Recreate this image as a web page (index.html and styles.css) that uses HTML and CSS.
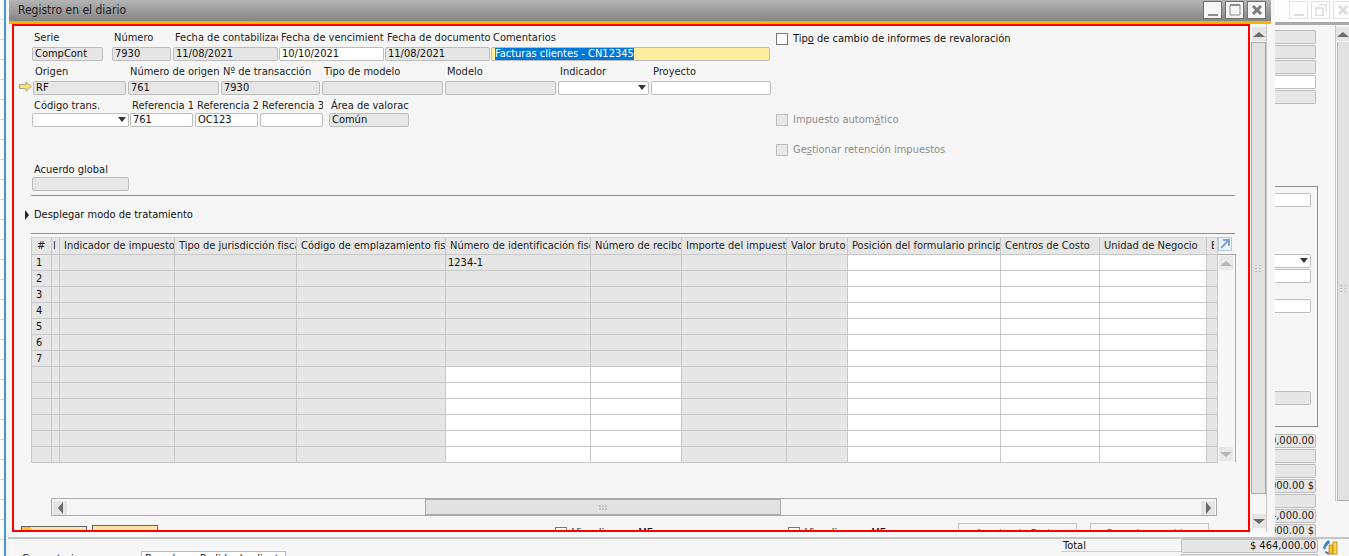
FILE: index.html
```html
<!DOCTYPE html>
<html lang="es">
<head>
    <meta charset="UTF-8">
    <meta name="viewport" content="width=device-width, initial-scale=1.0">
    <title>Registro en el diario</title>
    <link rel="stylesheet" href="styles.css">
</head>
<body>
    <svg class="defs" width="0" height="0">
        <symbol id="grip-v" viewBox="0 0 7 7"><path d="M0 0h2v1H0zM4 0h2v1H4zM0 3h2v1H0zM4 3h2v1H4zM0 6h2v1H0zM4 6h2v1H4z" fill="#bdbdbd"/></symbol>
        <symbol id="grip-h" viewBox="0 0 9 5"><path d="M0 0h2v2H0zM3 0h2v2H3zM6 0h2v2H6zM0 3h2v2H0zM3 3h2v2H3zM6 3h2v2H6z" fill="#c4c4c4"/></symbol>
    </svg>

    <!-- desktop behind the windows -->
    <div class="desk-strip"></div>

    <!-- window behind, only its right side and bottom show -->
    <div class="back-title">
        <div class="back-btn"><svg width="12" height="12"><path d="M1 10h10v2H1z" fill="#ddd"/></svg></div>
        <div class="back-btn"><svg width="12" height="12"><path d="M4 .5h7.500v7.500M1 4h7v7.500H1z" fill="none" stroke="#ddd" stroke-width="1.500"/></svg></div>
        <div class="back-btn"><svg width="12" height="12"><path d="M2 2l8 8M10 2l-8 8" stroke="#ddd" stroke-width="3"/></svg></div>
    </div>
    <div class="back-side">
        <div class="side-field grey"></div>
        <div class="side-field grey"></div>
        <div class="side-field grey"></div>
        <div class="side-field"></div>
        <div class="side-field grey"></div>
        <div class="side-box">
            <div class="box-field"></div>
            <div class="box-field dropdown"><span class="caret"></span></div>
            <div class="box-field"></div>
            <div class="box-field"></div>
            <div class="box-field grey"></div>
        </div>
        <div class="side-field grey">00,000.00</div>
        <div class="side-field grey"></div>
        <div class="side-field grey"></div>
        <div class="side-field grey">$ 6,000.00</div>
        <div class="side-field grey"></div>
        <div class="side-field grey">464,000.00</div>
        <div class="side-field grey">$ 6,000.00</div>
    </div>
    <div class="back-scroll">
        <div class="scroll-btn"><span class="tri up"></span></div>
        <div class="back-track"><svg class="grip" width="7" height="7"><use href="#grip-v"/></svg></div>
    </div>
    <div class="back-foot">
        <span class="foot-label">Comentarios</span>
        <div class="foot-select">Basado en Pedido de clientes</div>
        <span class="total-label">Total</span>
        <div class="total-col">
            <div class="total-value">$ 464,000.00</div>
            <div class="total-next"></div>
        </div>
        <svg class="coins" width="16" height="16" viewBox="0 0 16 16">
            <path d="M1 9C2 5 4 2 7 1l1 3C6 5 4 7 3 11z" fill="#3f86c8"/>
            <path d="M4 12c2 2 4 2 5 1v2c-2 1-5 0-6-2z" fill="#2f6fb0"/>
            <rect x="7" y="6" width="4" height="9" fill="#f6c22e" stroke="#b98412" stroke-width=".8"/>
            <rect x="11" y="3" width="4" height="12" fill="#fbd651" stroke="#b98412" stroke-width=".8"/>
        </svg>
    </div>

    <!-- front window -->
    <div class="window">
        <div class="titlebar">
            <span class="title">Registro en el diario</span>
            <div class="win-btns">
                <div class="win-btn"><svg width="12" height="12"><path d="M1 10h10v2H1z" fill="#8c8c8c"/></svg></div>
                <div class="win-btn"><svg width="12" height="12"><path d="M1 1h10v10H1z" fill="none" stroke="#8c8c8c"/><path d="M1 1h10" stroke="#8c8c8c" stroke-width="2"/></svg></div>
                <div class="win-btn"><svg width="12" height="12"><path d="M2 2l8 8M10 2l-8 8" stroke="#7c7c7c" stroke-width="3"/></svg></div>
            </div>
        </div>
        <div class="accent"></div>

        <div class="win-body">
            <div class="content">
                <div class="form-top">
                    <div class="form-left">
                        <div class="row row-a">
                            <div class="group w-serie"><label>Serie</label><div class="field grey">CompCont</div></div>
                            <div class="group w-numero"><label>Número</label><div class="field grey">7930</div></div>
                            <div class="group w-fecha"><label>Fecha de contabilizació</label><div class="field grey">11/08/2021</div></div>
                            <div class="group w-fecha"><label>Fecha de vencimiento</label><div class="field">10/10/2021</div></div>
                            <div class="group w-fecha"><label>Fecha de documento</label><div class="field grey">11/08/2021</div></div>
                            <div class="group w-coment"><label>Comentarios</label><div class="field focus"><span class="selected">Facturas clientes - CN12345</span></div></div>
                        </div>
                        <div class="row row-b">
                            <svg class="link-arrow" width="13" height="11" viewBox="0 0 13 11"><path d="M.5 3.500h6.500V.8L12.300 5.500 7 10.200V7.500H.5z" fill="#fde36a" stroke="#a8a48c"/></svg>
                            <div class="group w-origen"><label>Origen</label><div class="field grey">RF</div></div>
                            <div class="group w-norigen"><label>Número de origen</label><div class="field grey">761</div></div>
                            <div class="group w-trans"><label>Nº de transacción</label><div class="field grey">7930</div></div>
                            <div class="group w-tipo"><label>Tipo de modelo</label><div class="field grey"></div></div>
                            <div class="group w-modelo"><label>Modelo</label><div class="field grey"></div></div>
                            <div class="group w-indic"><label>Indicador</label><div class="field dropdown"><span class="caret"></span></div></div>
                            <div class="group w-proy"><label>Proyecto</label><div class="field"></div></div>
                        </div>
                        <div class="row row-c">
                            <div class="group w-codigo"><label>Código trans.</label><div class="field dropdown"><span class="caret"></span></div></div>
                            <div class="group w-ref"><label>Referencia 1</label><div class="field">761</div></div>
                            <div class="group w-ref"><label>Referencia 2</label><div class="field">OC123</div></div>
                            <div class="group w-ref last"><label>Referencia 3</label><div class="field"></div></div>
                            <div class="group w-area"><label>Área de valoración</label><div class="field grey">Común</div></div>
                        </div>
                        <div class="row row-d">
                            <div class="group w-codigo"><label>Acuerdo global</label><div class="field grey"></div></div>
                        </div>
                    </div>
                    <div class="form-right">
                        <div class="check-row first"><span class="check"></span><span>Tip<u>o</u> de cambio de informes de revaloración</span></div>
                        <div class="check-row off second"><span class="check"></span><span>Impuesto autom<u>á</u>tico</span></div>
                        <div class="check-row off third"><span class="check"></span><span>Ge<u>s</u>tionar retención impuestos</span></div>
                    </div>
                </div>

                <div class="rule"></div>
                <div class="expander"><span class="tri right dark"></span>Desplegar modo de tratamiento</div>
                <div class="rule"></div>

                <div class="grid-wrap">
                    <table class="lines">
                        <thead>
                            <tr><th>#</th><th>l</th><th>Indicador de impuestos</th><th>Tipo de jurisdicción fiscal</th><th>Código de emplazamiento fiscal</th><th>Número de identificación fiscal</th><th>Número de recibo</th><th>Importe del impuesto</th><th>Valor bruto</th><th>Posición del formulario principal</th><th>Centros de Costo</th><th>Unidad de Negocio</th><th><span class="cut">E</span></th></tr>
                        </thead>
                        <tbody>
                            <tr><td>1</td><td></td><td></td><td></td><td></td><td class="tax-id">1234-1</td><td></td><td></td><td></td><td></td><td></td><td></td><td></td></tr>
                            <tr><td>2</td><td></td><td></td><td></td><td></td><td></td><td></td><td></td><td></td><td></td><td></td><td></td><td></td></tr>
                            <tr><td>3</td><td></td><td></td><td></td><td></td><td></td><td></td><td></td><td></td><td></td><td></td><td></td><td></td></tr>
                            <tr><td>4</td><td></td><td></td><td></td><td></td><td></td><td></td><td></td><td></td><td></td><td></td><td></td><td></td></tr>
                            <tr><td>5</td><td></td><td></td><td></td><td></td><td></td><td></td><td></td><td></td><td></td><td></td><td></td><td></td></tr>
                            <tr><td>6</td><td></td><td></td><td></td><td></td><td></td><td></td><td></td><td></td><td></td><td></td><td></td><td></td></tr>
                            <tr><td>7</td><td></td><td></td><td></td><td></td><td></td><td></td><td></td><td></td><td></td><td></td><td></td><td></td></tr>
                            <tr class="open"><td></td><td></td><td></td><td></td><td></td><td></td><td></td><td></td><td></td><td></td><td></td><td></td><td></td></tr>
                            <tr class="open"><td></td><td></td><td></td><td></td><td></td><td></td><td></td><td></td><td></td><td></td><td></td><td></td><td></td></tr>
                            <tr class="open"><td></td><td></td><td></td><td></td><td></td><td></td><td></td><td></td><td></td><td></td><td></td><td></td><td></td></tr>
                            <tr class="open"><td></td><td></td><td></td><td></td><td></td><td></td><td></td><td></td><td></td><td></td><td></td><td></td><td></td></tr>
                            <tr class="open"><td></td><td></td><td></td><td></td><td></td><td></td><td></td><td></td><td></td><td></td><td></td><td></td><td></td></tr>
                            <tr class="open"><td></td><td></td><td></td><td></td><td></td><td></td><td></td><td></td><td></td><td></td><td></td><td></td><td></td></tr>
                        </tbody>
                    </table>
                    <div class="grid-side">
                        <svg class="expand" width="14" height="14" viewBox="0 0 14 14">
                            <rect x=".5" y=".5" width="13" height="13" fill="#eef3f9" stroke="#b4cbe4"/>
                            <path d="M3 11l7-7M5 3h6v6" fill="none" stroke="#7ea6d2" stroke-width="2"/>
                        </svg>
                        <div class="grid-vbar">
                            <div class="scroll-btn faded"><span class="tri up"></span></div>
                            <div class="scroll-btn faded"><span class="tri down"></span></div>
                        </div>
                    </div>
                </div>

                <div class="hbar">
                    <div class="scroll-btn"><span class="tri left"></span></div>
                    <div class="hbar-thumb"><svg width="9" height="5"><use href="#grip-h"/></svg></div>
                    <div class="scroll-btn"><span class="tri right"></span></div>
                </div>

                <div class="actions">
                    <button class="btn-add"><span class="btn-mark"></span>Añadir</button>
                    <button class="btn-cancel">Cancelar</button>
                    <div class="check-row foot-a"><span class="check"></span><span>Visualizar en ME</span></div>
                    <div class="check-row foot-b"><span class="check"></span><span>Visualizar en ME</span></div>
                    <button class="btn-off first-off">Asociar de Fecha</button>
                    <button class="btn-off">Cancelar cambios</button>
                </div>
            </div>

            <div class="win-scroll">
                <div class="scroll-btn"><span class="tri up"></span></div>
                <div class="win-track"><svg class="grip" width="7" height="7"><use href="#grip-v"/></svg></div>
                <div class="win-gap"></div>
                <div class="scroll-btn"><span class="tri down"></span></div>
            </div>
        </div>
        <div class="win-foot"></div>

        <!-- red highlight drawn over the screenshot -->
        <div class="highlight"></div>
    </div>
</body>
</html>
```

FILE: styles.css
```css
* {
    box-sizing: border-box;
}

html, body {
    margin: 0;
    height: 100%;
}

body {
    position: relative;
    overflow: hidden;
    background: #f6f6f6;
    color: #222;
    font-family: "DejaVu Sans", sans-serif;
    font-stretch: condensed;
    font-size: 11px;
    line-height: 14px;
}

.defs {
    position: absolute;
}

/* desktop strip */
.desk-strip {
    position: absolute;
    left: 0;
    top: 0;
    width: 9px;
    height: 556px;
    background: repeating-linear-gradient(#fafafa 0, #fafafa 19px, #d9d9d9 19px, #d9d9d9 20px);
    border-right: 3px solid #f4f4f4;
}

.desk-strip::after {
    content: "";
    position: absolute;
    left: 4px;
    top: 0;
    width: 2px;
    height: 100%;
    background: #4a94d8;
}

/* back window */
.back-title {
    position: absolute;
    left: 1275px;
    top: 0;
    width: 74px;
    height: 25px;
    display: flex;
    gap: 3px;
    padding: 1px 0 0 14px;
    background: #fdfdfd;
    border-bottom: 3px solid #aaa;
}

.back-btn {
    flex: none;
    width: 19px;
    height: 18px;
    border: 1px solid #e2e2e2;
    display: flex;
    align-items: center;
    justify-content: center;
}

.back-side {
    position: absolute;
    left: 1275px;
    top: 30px;
    width: 43px;
    overflow: hidden;
}

.side-field {
    width: 41px;
    height: 14px;
    margin-bottom: 1px;
    padding-right: 1px;
    border: 1px solid #bcbcbc;
    border-left: none;
    border-radius: 0 2px 2px 0;
    background: #fff;
    text-align: right;
    white-space: nowrap;
    line-height: 12px;
    direction: rtl;
    overflow: hidden;
}

.side-field.grey,
.box-field.grey {
    background: #e6e6e6;
}

.side-box {
    width: 43px;
    height: 241px;
    margin: 82px 0 7px;
    padding-top: 6px;
    border: 1px solid #8c8c8c;
    border-left: none;
    border-bottom-color: #8c8c8c;
}

.box-field {
    position: relative;
    width: 36px;
    height: 14px;
    margin-bottom: 47px;
    border: 1px solid #bcbcbc;
    border-left: none;
    border-radius: 0 2px 2px 0;
    background: #fff;
}

.box-field.dropdown {
    margin-bottom: 1px;
}

.box-field:nth-child(3) {
    margin-bottom: 16px;
}

.box-field:nth-child(4) {
    margin-bottom: 78px;
}

.back-scroll {
    position: absolute;
    left: 1335px;
    top: 25px;
    width: 14px;
    height: 476px;
    padding-top: 2px;
    border-left: 1px solid #c4c4c0;
    display: flex;
    flex-direction: column;
}

.back-track {
    flex: 1;
    position: relative;
    margin-top: 1px;
    margin-left: 1px;
    border-left: 1px solid #bbb;
    border-bottom: 1px solid #aaa;
    background: #e1e1e1;
}

.back-foot {
    position: absolute;
    left: 8px;
    right: 0;
    top: 537px;
    height: 19px;
    display: flex;
    border-top: 2px solid #c4c4c4;
    overflow: hidden;
}

.foot-label {
    margin: 13px 0 0 14px;
    width: 119px;
    color: #111;
    flex: none;
}

.foot-select {
    flex: none;
    width: 145px;
    height: 20px;
    margin-top: 12px;
    padding-left: 3px;
    border: 1px solid #bcbcbc;
    background: #fff;
    color: #111;
    white-space: nowrap;
    overflow: hidden;
}

.total-label {
    flex: none;
    width: 120px;
    height: 13px;
    margin-left: 775px;
    padding-left: 2px;
    border-bottom: 1px solid #d0d0d0;
    line-height: 13px;
    color: #111;
}

.total-col {
    flex: none;
    width: 137px;
}

.total-value {
    height: 14px;
    padding-right: 1px;
    border: 1px solid #bcbcbc;
    border-radius: 2px;
    background: #e6e6e6;
    text-align: right;
    line-height: 12px;
    color: #111;
}

.total-next {
    height: 6px;
    margin-top: 1px;
    border: 1px solid #bcbcbc;
    background: #e6e6e6;
}

.coins {
    flex: none;
    margin: 0 0 0 4px;
}

/* front window */
.window {
    position: absolute;
    left: 9px;
    top: 0;
    width: 1262px;
    height: 537px;
    background: #f6f6f6;
    display: flex;
    flex-direction: column;
}

.titlebar {
    flex: none;
    height: 21px;
    display: flex;
    align-items: center;
    justify-content: space-between;
    padding: 0 5px 0 9px;
    background: linear-gradient(#b4b4b4, #858585);
}

.title {
    font-size: 12px;
    color: #1c1c1c;
    margin-top: -2px;
}

.win-btns {
    display: flex;
    gap: 3px;
    margin-top: -1px;
}

.win-btn {
    width: 19px;
    height: 18px;
    border: 1px solid #6e6e6e;
    background: #f5f5f5;
    display: flex;
    align-items: center;
    justify-content: center;
}

.accent {
    flex: none;
    height: 3px;
    background: #f7b500;
}

.win-body {
    flex: none;
    height: 508px;
    display: flex;
    overflow: hidden;
}

.win-foot {
    flex: 1;
    background: #fbfbfb;
}

.content {
    width: 1242px;
    flex: none;
    padding-top: 7px;
}

.highlight {
    position: absolute;
    left: 3px;
    top: 24px;
    width: 1238px;
    height: 508px;
    border: 2px solid #f00;
    pointer-events: none;
}

/* header form */
.form-top {
    display: flex;
    height: 161px;
    margin-left: 23px;
}

.form-left {
    width: 744px;
    flex: none;
}

.form-right {
    flex: none;
}

.row {
    display: flex;
    height: 30px;
}

.row-b {
    margin: 4px 0 0 -13px;
    gap: 2px;
}

.row-c {
    margin-top: 4px;
    height: 28px;
}

.row-d {
    margin-top: 36px;
    height: 28px;
}

.group label {
    display: block;
    height: 16px;
    padding-left: 2px;
    white-space: nowrap;
    overflow: hidden;
}

.row-c label,
.row-d label {
    height: 14px;
}

.field {
    position: relative;
    height: 14px;
    padding-left: 2px;
    border: 1px solid #bcbcbc;
    border-radius: 2px;
    background: #fff;
    line-height: 12px;
    color: #111;
    white-space: nowrap;
    overflow: hidden;
}

.field.grey {
    background: #e6e6e6;
}

.field.focus {
    padding-left: 3px;
    background: #ffee9e;
}

.selected {
    display: inline-block;
    background: #0078d7;
    color: #fff;
}

.caret {
    position: absolute;
    right: 2px;
    top: 3px;
    border-left: 4px solid transparent;
    border-right: 4px solid transparent;
    border-top: 5px solid #333;
}

.w-serie { width: 71px; margin-right: 9px; }
.w-numero { width: 59px; margin-right: 2px; }
.w-fecha { width: 105px; margin-right: 1px; }
.w-coment { width: 279px; }

.link-arrow { flex: none; align-self: flex-end; margin: 0 -1px 3px 0; }
.w-origen { width: 93px; }
.w-norigen { width: 91px; }
.w-trans { width: 99px; }
.w-tipo { width: 121px; }
.w-modelo { width: 111px; }
.w-indic { width: 91px; }
.w-proy { width: 120px; }

.w-codigo { width: 97px; margin-right: 1px; }
.w-ref { width: 63px; margin-right: 2px; }
.w-ref.last { margin-right: 6px; }
.w-area { width: 80px; }

/* check boxes */
.check-row {
    display: flex;
    align-items: center;
    gap: 5px;
    white-space: nowrap;
    color: #111;
}

.check {
    flex: none;
    width: 12px;
    height: 12px;
    border: 1px solid #777;
    background: #fff;
}

.check-row.off {
    color: #8e8e8e;
}

.check-row.off .check {
    border-color: #bcbcbc;
    background: #e8e8e8;
}

.check-row.first { margin-top: 1px; }
.check-row.second { margin-top: 67px; }
.check-row.third { margin-top: 16px; }

/* rules and expander */
.rule {
    height: 1px;
    margin: 0 0 0 22px;
    width: 1204px;
    background: #8c8c8c;
}

.form-top + .rule {
    margin-top: 3px;
}

.expander {
    height: 37px;
    display: flex;
    align-items: center;
    gap: 5px;
    padding-left: 16px;
    color: #111;
}

/* small triangles */
.tri {
    display: block;
    width: 0;
    height: 0;
    border: 0 solid transparent;
}

.tri.up { border-width: 0 6px 5px; border-bottom-color: #6a6a6a; }
.tri.down { border-width: 5px 6px 0; border-top-color: #6a6a6a; }
.tri.left { border-width: 6px 5px 6px 0; border-right-color: #6a6a6a; }
.tri.right { border-width: 6px 0 6px 5px; border-left-color: #6a6a6a; }
.tri.dark { border-width: 5px 0 5px 4px; border-left-color: #222; }

.scroll-btn {
    flex: none;
    width: 14px;
    height: 14px;
    background: #e4e4e4;
    display: flex;
    align-items: center;
    justify-content: center;
}

/* grid */
.grid-wrap {
    display: flex;
    margin: 3px 0 0 22px;
    height: 226px;
}

.lines {
    flex: none;
    width: 1187px;
    table-layout: fixed;
    border-collapse: separate;
    border-spacing: 0;
    align-self: flex-start;
}

.lines th,
.lines td {
    padding: 0 0 0 4px;
    height: 16px;
    border-right: 1px solid #c8c8c8;
    border-bottom: 1px solid #c8c8c8;
    background: #e6e6e6;
    font-weight: normal;
    text-align: left;
    white-space: nowrap;
    overflow: hidden;
    line-height: 14px;
}

.lines th {
    height: 18px;
    border-top: 1px solid #d4d4d4;
    color: #222;
}

.lines tr > :first-child {
    border-left: 1px solid #c8c8c8;
}

.lines th:nth-child(1) { width: 21px; padding-left: 5px; }
.lines th:nth-child(2) { width: 8px; padding-left: 1px; }
.lines th:nth-child(3) { width: 115px; }
.lines th:nth-child(4) { width: 122px; }
.lines th:nth-child(5) { width: 149px; }
.lines th:nth-child(6) { width: 145px; }
.lines th:nth-child(7) { width: 91px; }
.lines th:nth-child(8) { width: 105px; }
.lines th:nth-child(9) { width: 61px; }
.lines th:nth-child(10) { width: 153px; }
.lines th:nth-child(11) { width: 99px; }
.lines th:nth-child(12) { width: 107px; }
.lines th:nth-child(13) { width: 11px; }

.lines td:nth-child(10),
.lines td:nth-child(11),
.lines td:nth-child(12),
.lines .open td:nth-child(6),
.lines .open td:nth-child(7) {
    background: #fff;
}

.lines td {
    color: #111;
}

.lines .tax-id {
    padding-left: 2px;
}

.cut {
    display: block;
    width: 3px;
    overflow: hidden;
}

.grid-side {
    flex: none;
    width: 18px;
    display: flex;
    flex-direction: column;
}

.expand {
    flex: none;
    margin-bottom: 3px;
}

.grid-vbar {
    flex: none;
    height: 208px;
    padding: 1px 0 1px 1px;
    border-right: 1px solid #aaa;
    border-top: 1px solid #aaa;
    display: flex;
    flex-direction: column;
    justify-content: space-between;
}

.scroll-btn.faded {
    background: #e8e8e8;
}

.scroll-btn.faded .tri.up { border-bottom-color: #b8b8b8; }
.scroll-btn.faded .tri.down { border-top-color: #b8b8b8; }

/* horizontal scroll bar */
.hbar {
    display: flex;
    justify-content: space-between;
    position: relative;
    width: 1166px;
    height: 18px;
    margin: 35px 0 0 42px;
    padding: 1px;
    border: 1px solid #aaa;
}

.hbar .scroll-btn {
    margin-top: 1px;
    width: 14px;
}

.hbar-thumb {
    position: absolute;
    left: 373px;
    top: -1px;
    width: 356px;
    height: 17px;
    border: 1px solid #aaa;
    border-top-width: 2px;
    background: #e1e1e1;
    display: flex;
    align-items: center;
    justify-content: center;
}

/* bottom actions, cut off by the highlight */
.actions {
    display: flex;
    align-items: flex-start;
    margin: 7px 0 0 12px;
}

.actions button {
    flex: none;
    padding: 0;
    font: inherit;
    font-stretch: condensed;
}

.btn-add,
.btn-cancel {
    position: relative;
    width: 66px;
    height: 22px;
    border: 1px solid #666;
    background: #fde3a8;
    color: #222;
    overflow: hidden;
}

.btn-add {
    margin: 3px 5px 0 0;
}

.btn-cancel {
    margin-top: 2px;
}

.btn-mark {
    position: absolute;
    left: 0;
    top: 0;
    width: 9px;
    height: 100%;
    background: #fcbf2a;
}

.check-row.foot-a {
    margin: 3px 0 0 397px;
}

.check-row.foot-b {
    margin: 3px 0 0 135px;
}

.btn-off {
    width: 119px;
    height: 22px;
    border: 1px solid #c4c4c4;
    background: #f6f6f6;
    color: #555;
    margin-left: 13px;
}

.btn-off.first-off {
    margin-left: 72px;
}

/* window scroll bar */
.win-scroll {
    flex: none;
    width: 16px;
    padding: 3px 0 4px;
    display: flex;
    flex-direction: column;
    border-right: 1px solid #c8c8c4;
}

.win-scroll .scroll-btn {
    margin-left: 1px;
}

.win-track {
    position: relative;
    flex: none;
    height: 452px;
    margin-top: 1px;
    border: 1px solid #aaa;
    background: #e1e1e1;
}

.win-gap {
    flex: 1;
}

.grip {
    position: absolute;
    left: 3px;
    top: 222px;
}

.back-track .grip {
    left: 2px;
    top: 243px;
}
```
